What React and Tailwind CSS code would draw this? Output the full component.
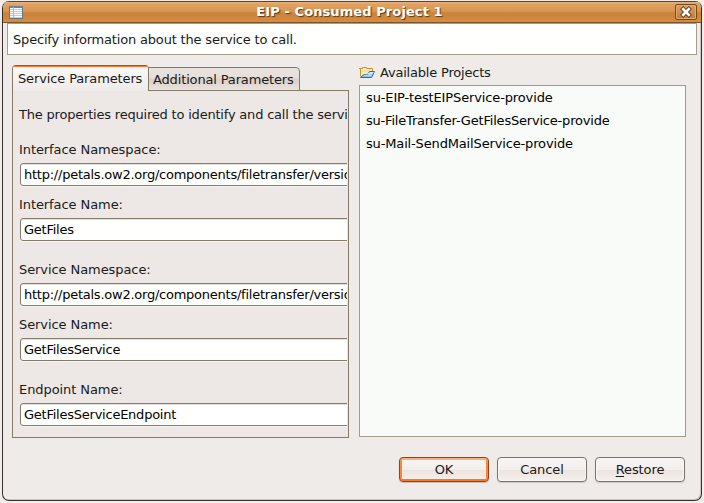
import React from "react";

const projects = [
  "su-EIP-testEIPService-provide",
  "su-FileTransfer-GetFilesService-provide",
  "su-Mail-SendMailService-provide",
];

function TitleBar() {
  return (
    <div className="flex h-[22px] shrink-0 items-center border-t border-b border-t-[#5c4326] border-b-[#7d5529] bg-[linear-gradient(#eab67e_0px,#e0a263_2px,#da9751_9px,#c98239_11px,#d48d42_20px)] pl-[6px] pr-[4px]">
      <svg width="14" height="13" viewBox="0 0 14 13" shapeRendering="crispEdges" className="mt-px shrink-0">
        <rect width="14" height="13" fill="#677788" />
        <rect width="14" height="2" fill="#6484a8" />
        <rect x="1" y="2" width="12" height="10" fill="#fff" />
        <path d="M1 3.5h12M1 5.5h12M1 7.5h12M1 9.5h12M1 11.5h12" stroke="#c6cbd0" />
        <path d="M4.5 1v11" stroke="#aab4bf" />
      </svg>
      <h1 className="flex-1 pl-[1px] text-center text-[13px] leading-[20px] font-bold tracking-[0.09px] text-white [text-shadow:1px_1px_1px_#573818]">
        EIP - Consumed Project 1
      </h1>
      <button className="flex h-[16px] w-[22px] items-center justify-center rounded-[2px] border border-[#74491f] bg-[linear-gradient(#dda064,#c27c35)] shadow-[inset_0_0_0_1px_#dfaa73]">
        <svg width="12" height="12" viewBox="0 0 12 12" className="shrink-0">
          <path d="M3.2 3.2l5.6 5.6M8.8 3.2l-5.6 5.6" stroke="#5f3c18" strokeWidth="4.4" strokeLinecap="square" />
          <path d="M3.2 3.2l5.6 5.6M8.8 3.2l-5.6 5.6" stroke="#fff" strokeWidth="2.6" strokeLinecap="square" />
        </svg>
      </button>
    </div>
  );
}

function Field({ label, value, className }) {
  return (
    <label className={className}>
      <span className="block h-[21px] leading-[16px] tracking-[-0.08px]">{label}</span>
      <span className="ml-px block h-[23px] w-[400px] rounded-[3px] border border-[#857a6e] bg-[#fffffd] pl-[3px] leading-[21px] tracking-[-0.24px] whitespace-nowrap text-black shadow-[0_1px_0_#f8f4f1,inset_0_1px_0_#e5e0dc]">
        {value}
      </span>
    </label>
  );
}

function ServicePanel() {
  return (
    <section className="flex w-[337px] shrink-0 flex-col">
      <div className="z-10 flex h-[26px] shrink-0 items-start">
        <div className="h-[26px] w-[137px] overflow-hidden rounded-t-[4px] border-x border-[#857a6a] bg-[linear-gradient(#fbf9f8,#efebe8)] tracking-[-0.13px] whitespace-nowrap">
          <div className="h-[2px] border-t border-[#b84b17] bg-[#ff7a2e]" />
          <div className="pl-[5px] leading-[24px]">Service Parameters</div>
        </div>
        <div className="mt-[2px] -ml-px h-[24px] w-[152px] rounded-tr-[4px] border border-[#857a6a] bg-[linear-gradient(#e9e2de_0%,#e5dedb_46%,#dacfca_50%,#e9e3df_100%)] pl-[4px] leading-[23px] tracking-[-0.15px] whitespace-nowrap">
          Additional Parameters
        </div>
      </div>
      <div className="-mt-px h-[348px] border border-[#857a6a] bg-[#ede8e5] pr-px">
        <div className="h-full overflow-hidden pl-[6px]">
          <p className="mt-[16px] h-[16px] leading-[16px] tracking-[-0.2px] whitespace-nowrap">
            The properties required to identify and call the service.
          </p>
          <Field className="mt-[19px] block" label="Interface Namespace:" value="http://petals.ow2.org/components/filetransfer/version/" />
          <Field className="mt-[11px] block" label="Interface Name:" value="GetFiles" />
          <Field className="mt-[21px] block" label="Service Namespace:" value="http://petals.ow2.org/components/filetransfer/version/" />
          <Field className="mt-[11px] block" label="Service Name:" value="GetFilesService" />
          <Field className="mt-[21px] block" label="Endpoint Name:" value="GetFilesServiceEndpoint" />
        </div>
      </div>
    </section>
  );
}

function FolderIcon() {
  return (
    <svg width="16" height="13" viewBox="0 0 16 13" className="-mt-[6px] shrink-0">
      <path d="M1.5 10.5V2.5H3.5V1.5H7.5V2.5H13.5V6" fill="#fdebb0" stroke="#c49240" />
      <path d="M0 2.5H3" stroke="#c49240" />
      <path d="M2 4H13V6H2Z" fill="#fbe29a" />
      <path d="M1.5 11.5L5 8.5H8.5L10.5 5.5H15.5L12.5 11.5Z" fill="#8fc0f2" stroke="#3565b4" strokeLinejoin="round" />
      <path d="M10.5 6.5H14.5M9 7.5H14M5.5 9.2H13" stroke="#cfe6fc" />
    </svg>
  );
}

function ProjectsPanel() {
  return (
    <section className="flex w-[327px] shrink-0 flex-col">
      <h2 className="flex h-[20px] items-center gap-[5px] leading-[16px] tracking-[-0.2px]">
        <FolderIcon />
        <span className="-mt-[5px]">Available Projects</span>
      </h2>
      <ul className="h-[352px] border border-[#a49a8c] bg-[#f8fbf7] pl-[6px] tracking-[-0.2px] text-black">
        {projects.map((project) => (
          <li key={project} className="h-[23px] leading-[23px] first:tracking-[-0.13px] last:tracking-[-0.15px]">{project}</li>
        ))}
      </ul>
    </section>
  );
}

function DialogButton({ primary, children }) {
  const frame = primary
    ? "border-[#8c451b] shadow-[inset_0_2px_0_#ffae79,inset_2px_0_0_#ff8435,inset_-2px_0_0_#ff8435,inset_0_-2px_0_#ff7420,0_1px_1px_#c5bdb8]"
    : "border-[#7c7166] shadow-[inset_0_0_0_1px_#faf8f7,0_1px_1px_#d0c9c4]";
  return (
    <button className={`h-[25px] w-[90px] rounded-[4px] border bg-[linear-gradient(#f8f6f5_0%,#f2eeec_50%,#ebe3df_52%,#f5f1ef_100%)] leading-[23px] tracking-[-0.1px] ${frame}`}>
      {children}
    </button>
  );
}

export default function App() {
  return (
    <main className="h-[503px] w-[704px] overflow-hidden bg-[#f2edeb] pt-px pl-[2px] text-[13px] text-[#1a1a1a] [font-family:'DejaVu_Sans',sans-serif]">
      <div className="flex h-[500px] w-[700px] flex-col overflow-hidden rounded-[7px] border-x border-b border-[#35302d] bg-[#efebe8] shadow-[inset_-1px_-1px_0_#cbc4c0]">
        <TitleBar />
        <div className="mx-[4px] h-[32px] shrink-0 border border-[#a59b8f] bg-[#fffffd] pl-[5px] leading-[32px] tracking-[-0.18px]">
          Specify information about the service to call.
        </div>
        <div className="flex gap-[10px] pt-[10px] pl-[9px]">
          <ServicePanel />
          <ProjectsPanel />
        </div>
        <div className="mt-[19px] flex justify-end gap-[8px] pr-[16px]">
          <DialogButton primary>OK</DialogButton>
          <DialogButton>Cancel</DialogButton>
          <DialogButton>
            <span className="underline underline-offset-2">R</span>estore
          </DialogButton>
        </div>
      </div>
    </main>
  );
}
